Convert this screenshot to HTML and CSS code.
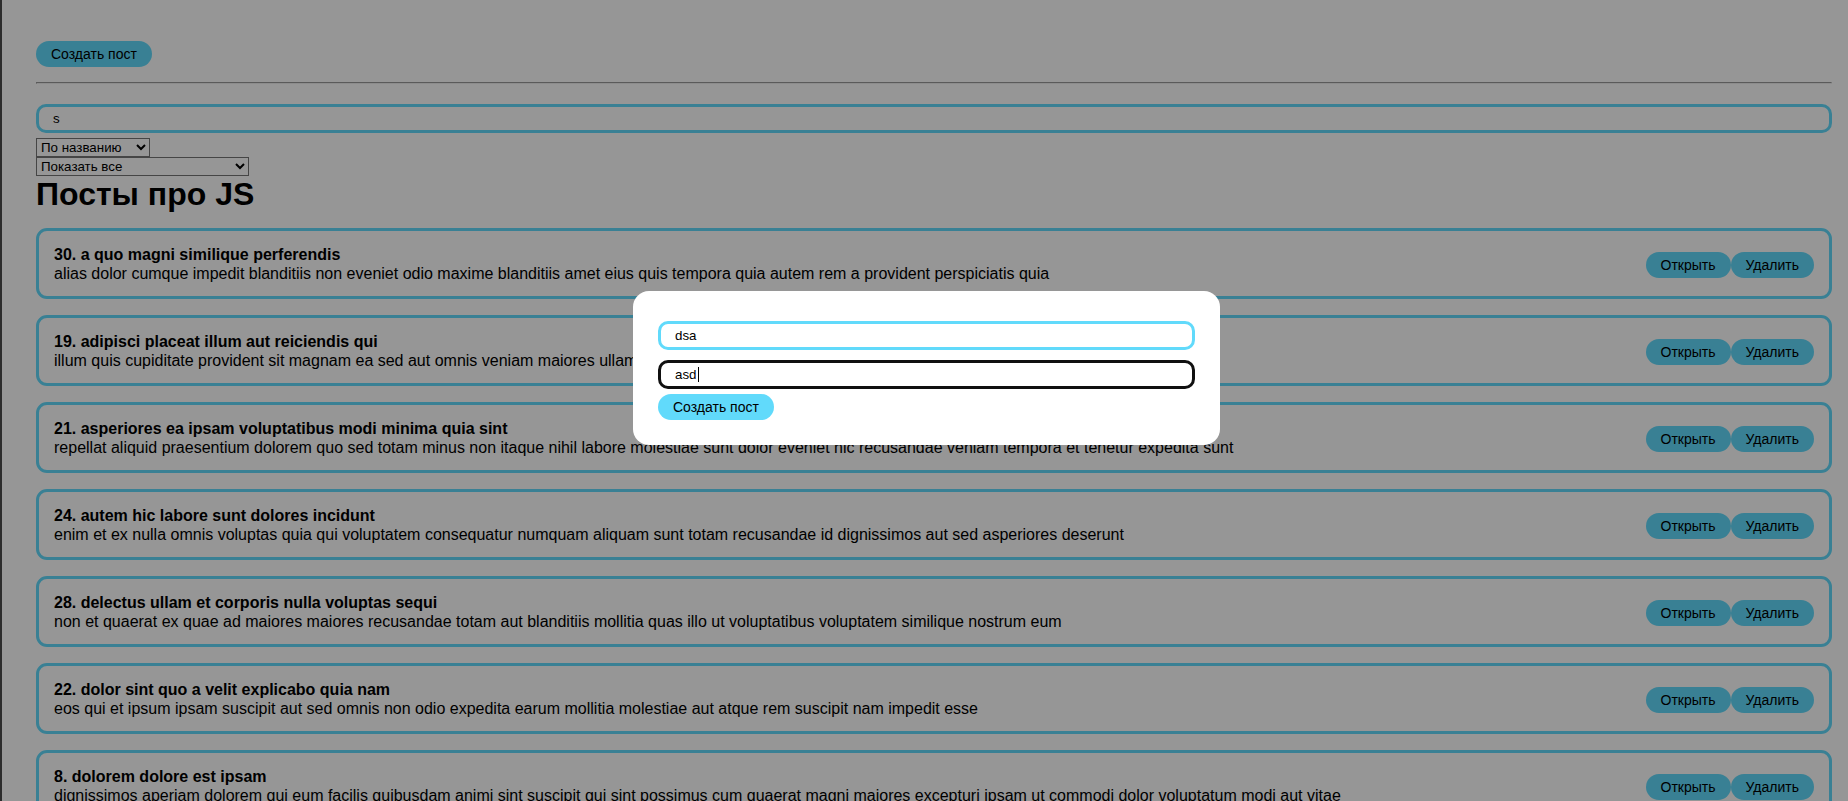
FILE: index.html
```html
<!DOCTYPE html>
<html lang="ru">
<head>
<meta charset="utf-8">
<title>Посты про JS</title>
<link rel="stylesheet" href="styles.css">
</head>
<body>
<div class="app">
  <button class="btn">Создать пост</button>
  <hr class="divider">
  <input class="input search" type="text" value="s" placeholder="Поиск...">
  <select class="select sort">
    <option>По названию</option>
    <option>По описанию</option>
  </select>
  <select class="select limit">
    <option>Показать все</option>
    <option>5</option>
    <option>10</option>
    <option>25</option>
  </select>
  <h1 class="list-title">Посты про JS</h1>
  <div class="posts">
    <div class="post">
      <div class="post-content">
        <div class="post-title">30. a quo magni similique perferendis</div>
        <div class="post-body">alias dolor cumque impedit blanditiis non eveniet odio maxime blanditiis amet eius quis tempora quia autem rem a provident perspiciatis quia</div>
      </div>
      <div class="post-actions"><button class="btn">Открыть</button><button class="btn">Удалить</button></div>
    </div>
    <div class="post">
      <div class="post-content">
        <div class="post-title">19. adipisci placeat illum aut reiciendis qui</div>
        <div class="post-body">illum quis cupiditate provident sit magnam ea sed aut omnis veniam maiores ullam consequatur atque adipisci quo iste expedita sit quos voluptas</div>
      </div>
      <div class="post-actions"><button class="btn">Открыть</button><button class="btn">Удалить</button></div>
    </div>
    <div class="post">
      <div class="post-content">
        <div class="post-title">21. asperiores ea ipsam voluptatibus modi minima quia sint</div>
        <div class="post-body">repellat aliquid praesentium dolorem quo sed totam minus non itaque nihil labore molestiae sunt dolor eveniet hic recusandae veniam tempora et tenetur expedita sunt</div>
      </div>
      <div class="post-actions"><button class="btn">Открыть</button><button class="btn">Удалить</button></div>
    </div>
    <div class="post">
      <div class="post-content">
        <div class="post-title">24. autem hic labore sunt dolores incidunt</div>
        <div class="post-body">enim et ex nulla omnis voluptas quia qui voluptatem consequatur numquam aliquam sunt totam recusandae id dignissimos aut sed asperiores deserunt</div>
      </div>
      <div class="post-actions"><button class="btn">Открыть</button><button class="btn">Удалить</button></div>
    </div>
    <div class="post">
      <div class="post-content">
        <div class="post-title">28. delectus ullam et corporis nulla voluptas sequi</div>
        <div class="post-body">non et quaerat ex quae ad maiores maiores recusandae totam aut blanditiis mollitia quas illo ut voluptatibus voluptatem similique nostrum eum</div>
      </div>
      <div class="post-actions"><button class="btn">Открыть</button><button class="btn">Удалить</button></div>
    </div>
    <div class="post">
      <div class="post-content">
        <div class="post-title">22. dolor sint quo a velit explicabo quia nam</div>
        <div class="post-body">eos qui et ipsum ipsam suscipit aut sed omnis non odio expedita earum mollitia molestiae aut atque rem suscipit nam impedit esse</div>
      </div>
      <div class="post-actions"><button class="btn">Открыть</button><button class="btn">Удалить</button></div>
    </div>
    <div class="post">
      <div class="post-content">
        <div class="post-title">8. dolorem dolore est ipsam</div>
        <div class="post-body">dignissimos aperiam dolorem qui eum facilis quibusdam animi sint suscipit qui sint possimus cum quaerat magni maiores excepturi ipsam ut commodi dolor voluptatum modi aut vitae</div>
      </div>
      <div class="post-actions"><button class="btn">Открыть</button><button class="btn">Удалить</button></div>
    </div>
  </div>
</div>

<div class="overlay">
  <div class="modal">
    <form class="modal-form">
      <input class="input" type="text" value="dsa" placeholder="Название поста">
      <div class="input input-focused">asd<span class="caret"></span></div>
      <button class="btn" type="button">Создать пост</button>
    </form>
  </div>
</div>
</body>
</html>
```
FILE: styles.css
```css
html {
  overflow: hidden;
}

body {
  margin: 0;
  background: #ffffff;
  color: #000000;
  font-family: "Liberation Sans", Arial, sans-serif;
}

.app {
  display: flex;
  flex-direction: column;
  align-items: flex-start;
  padding: 41px 16px 0 36px;
}

.btn {
  margin: 0;
  padding: 5px 15px;
  border: none;
  border-radius: 13px;
  background: #61dafb;
  color: #000000;
  font-family: "Liberation Sans", Arial, sans-serif;
  font-size: 14px;
  line-height: normal;
  white-space: nowrap;
  cursor: pointer;
}

.divider {
  align-self: stretch;
  margin: 15px 0;
}

.input {
  display: flex;
  align-items: center;
  align-self: stretch;
  box-sizing: border-box;
  width: 100%;
  height: 29px;
  margin: 5px 0;
  padding: 0 14px;
  border: 3px solid #61dafb;
  border-radius: 10px;
  background: #ffffff;
  color: #000000;
  font-family: "Liberation Sans", Arial, sans-serif;
  font-size: 13.333px;
  outline: none;
}

.input-focused {
  border-color: #101010;
}

.caret {
  display: inline-block;
  width: 1px;
  height: 15px;
  margin-left: 1px;
  background: #000000;
}

.select {
  display: block;
  box-sizing: border-box;
  height: 19px;
  font-family: "Liberation Sans", Arial, sans-serif;
  font-size: 13.333px;
  color: #000000;
  background: #ffffff;
}

.sort {
  width: 114px;
}

.limit {
  width: 213px;
}

.list-title {
  margin: 0;
  font-size: 32px;
  line-height: 36px;
  font-weight: bold;
}

.posts {
  align-self: stretch;
}

.post {
  display: flex;
  align-items: center;
  justify-content: space-between;
  margin-top: 16.2px;
  padding: 15px 15px 13px;
  border: 3px solid #61dafb;
  border-radius: 11px;
  font-size: 16px;
  line-height: 18.4px;
}

.post-title {
  font-weight: bold;
}

.post-actions {
  display: flex;
  flex: none;
}

.overlay {
  position: fixed;
  inset: 0;
  display: flex;
  justify-content: center;
  align-items: center;
  padding: 0 0 66px 5px;
  background: rgba(0, 0, 0, 0.41);
  box-shadow: inset 2px 0 0 #2c2c2c;
}

.modal {
  width: 537px;
  padding: 25px;
  background: #ffffff;
  border-radius: 16px;
}

.modal-form {
  display: flex;
  flex-direction: column;
  align-items: flex-start;
}
```
